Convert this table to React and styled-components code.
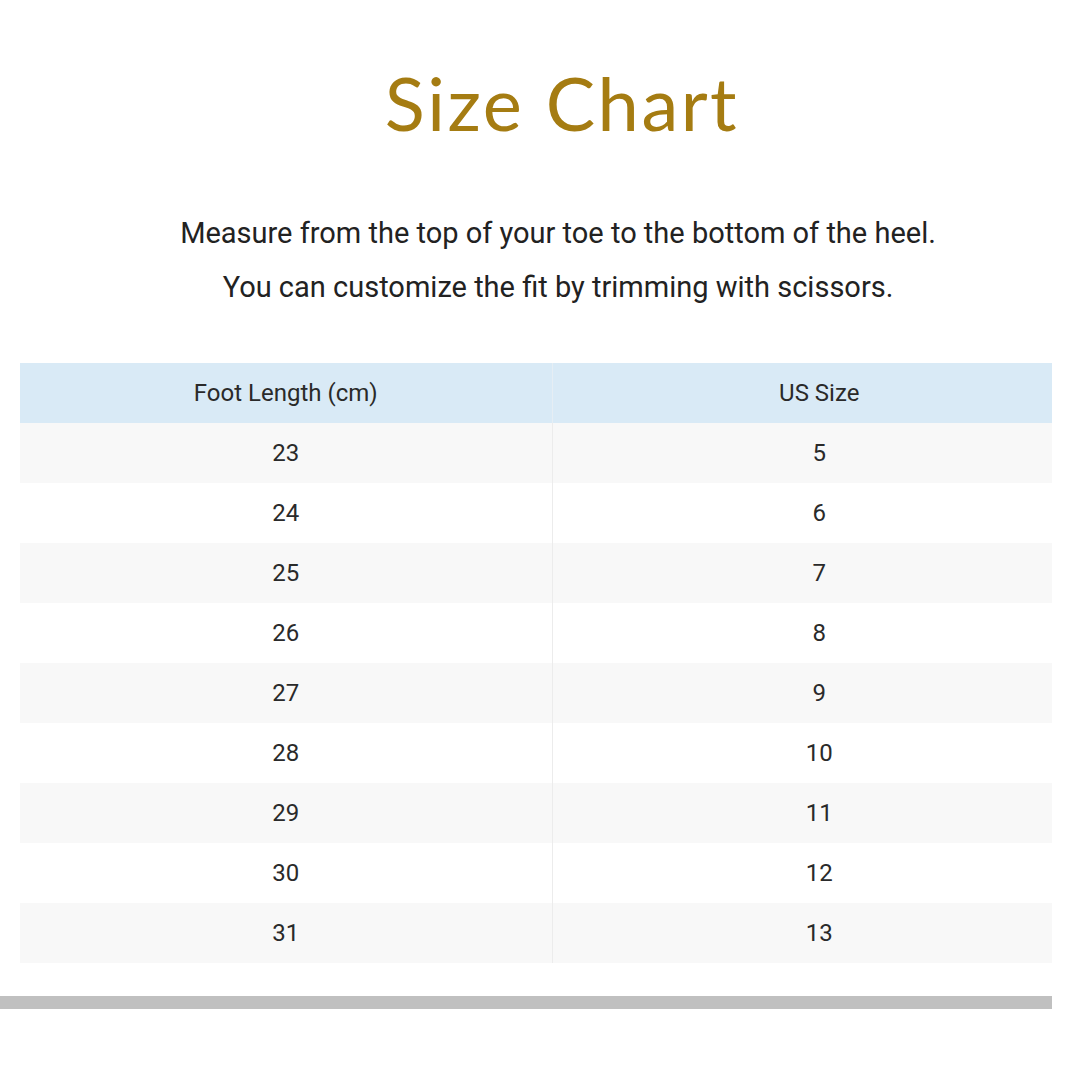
import React from 'react';
import styled, { createGlobalStyle } from 'styled-components';

const GlobalStyle = createGlobalStyle`
  body {
    margin: 0;
    background: #fff;
    font-family: Roboto, "Liberation Sans", sans-serif;
  }
`;

const Page = styled.div`
  width: 1052px;
  overflow: hidden;
`;

const Title = styled.h1`
  margin: 0;
  padding: 58px 0 0 72px;
  height: 104px;
  text-align: center;
  font-family: Lato, "Open Sans", sans-serif;
  font-weight: 400;
  font-size: 74px;
  letter-spacing: 2.5px;
  line-height: 90px;
  color: #a57c12;
`;

const Intro = styled.div`
  padding: 44px 0 0 64px;
  text-align: center;
  color: #222;
  font-size: 29px;
  line-height: 54px;
`;

const TableWrap = styled.div`
  margin: 49px 0 0 20px;
  width: 1066px;
`;

const Table = styled.table`
  width: 100%;
  border-collapse: collapse;
  table-layout: fixed;
  font-size: 24px;
  color: #2a2a2a;

  col:first-child {
    width: 532px;
  }
`;

const HeadCell = styled.th`
  height: 60px;
  padding: 0;
  background: #d9eaf6;
  font-weight: 400;
  text-align: center;
  border-left: ${(p) => (p.$divider ? '1px solid #e6eef4' : 'none')};
`;

const Row = styled.tr`
  background: ${(p) => (p.$shade ? '#f8f8f8' : '#fff')};
`;

const Cell = styled.td`
  height: 60px;
  padding: 0;
  text-align: center;
  border-left: ${(p) => (p.$divider ? '1px solid #ececec' : 'none')};
`;

const Bar = styled.div`
  margin-top: 33px;
  height: 13px;
  background: #c0c0c0;
`;

const sizes = [
  [23, 5],
  [24, 6],
  [25, 7],
  [26, 8],
  [27, 9],
  [28, 10],
  [29, 11],
  [30, 12],
  [31, 13],
];

export default function App() {
  return (
    <>
      <GlobalStyle />
      <Page>
        <Title>Size Chart</Title>
        <Intro>
          <div>Measure from the top of your toe to the bottom of the heel.</div>
          <div>You can customize the fit by trimming with scissors.</div>
        </Intro>
        <TableWrap>
          <Table>
            <colgroup>
              <col />
              <col />
            </colgroup>
            <thead>
              <tr>
                <HeadCell>Foot Length (cm)</HeadCell>
                <HeadCell $divider>US Size</HeadCell>
              </tr>
            </thead>
            <tbody>
              {sizes.map(([cm, us], i) => (
                <Row key={cm} $shade={i % 2 === 0}>
                  <Cell>{cm}</Cell>
                  <Cell $divider>{us}</Cell>
                </Row>
              ))}
            </tbody>
          </Table>
        </TableWrap>
        <Bar />
      </Page>
    </>
  );
}
